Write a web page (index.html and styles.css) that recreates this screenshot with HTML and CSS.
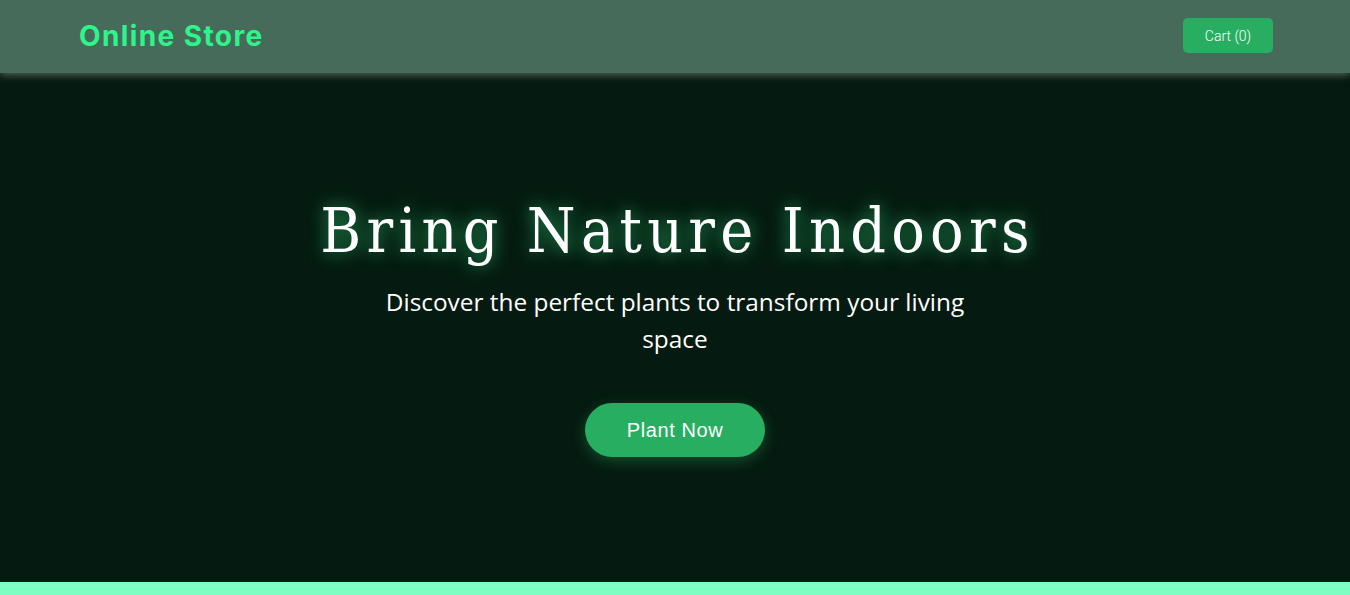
FILE: index.html
```html
<!DOCTYPE html>
<html lang="en">
<head>
<meta charset="utf-8">
<title>Online Store</title>
<link rel="stylesheet" href="styles.css">
</head>
<body>
<header class="topbar">
  <div class="brand">Online Store</div>
  <button class="cart">Cart (0)</button>
</header>
<main class="hero">
  <h1 class="hero-title">Bring Nature Indoors</h1>
  <p class="hero-sub">Discover the perfect plants to transform your living space</p>
  <button class="cta">Plant Now</button>
</main>
<footer class="footer"></footer>
</body>
</html>
```

FILE: styles.css
```css
* { box-sizing: border-box; }
html, body { margin: 0; padding: 0; }
body {
  background: #051a10;
  height: 595px;
  overflow: hidden;
  display: flex;
  flex-direction: column;
}
.topbar {
  height: 73px;
  flex: none;
  background: #476b5a;
  display: flex;
  align-items: center;
  justify-content: space-between;
  padding: 0 77px 0 79px;
  box-shadow: 0 2px 8px rgba(150, 165, 155, 0.55);
  position: relative;
  z-index: 2;
}
.brand {
  font-family: "Inter", "Open Sans", sans-serif;
  font-weight: 700;
  font-size: 28px;
  color: #2ef58a;
  letter-spacing: 1.4px;
  margin-top: -2px;
}
.cart {
  width: 90px;
  height: 35px;
  margin-top: -2px;
  background: #27ae60;
  border: none;
  border-radius: 5px;
  color: #fff;
  font-family: "Roboto", sans-serif;
  font-weight: 300;
  font-size: 14px;
}
.hero {
  flex: 1;
  display: flex;
  flex-direction: column;
  align-items: center;
  padding-top: 122px;
}
.hero-title {
  margin: 0 0 0 5px;
  font-family: "DejaVu Serif", serif;
  font-stretch: condensed;
  font-weight: 400;
  font-size: 62px;
  line-height: 72px;
  letter-spacing: 5.3px;
  color: #fff;
  text-shadow: 0 0 18px rgba(46, 204, 113, 0.85);
}
.hero-sub {
  margin: 16px 0 0;
  width: 620px;
  text-align: center;
  font-family: "Open Sans", sans-serif;
  font-size: 24.4px;
  line-height: 37px;
  color: #fff;
}
.cta {
  margin-top: 46px;
  width: 180px;
  height: 54px;
  border: none;
  border-radius: 27px;
  background: #27ae60;
  color: #fff;
  font-family: "Liberation Sans", Arial, sans-serif;
  font-size: 20px;
  letter-spacing: 0.6px;
  box-shadow: 0 4px 15px rgba(46, 204, 113, 0.3);
}
.footer {
  height: 13px;
  flex: none;
  background: #7dffc3;
}
```
